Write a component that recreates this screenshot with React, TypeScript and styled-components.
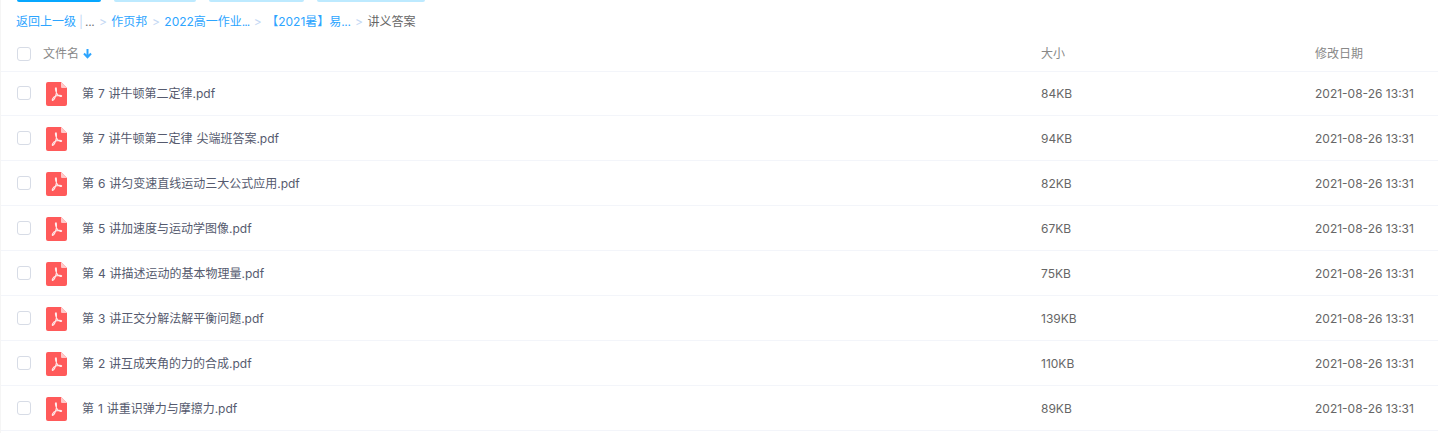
import { createGlobalStyle } from "styled-components"
import styled from "styled-components"

const files = [
    { name: "第 7 讲牛顿第二定律.pdf", size: "84KB" },
    { name: "第 7 讲牛顿第二定律 尖端班答案.pdf", size: "94KB" },
    { name: "第 6 讲匀变速直线运动三大公式应用.pdf", size: "82KB" },
    { name: "第 5 讲加速度与运动学图像.pdf", size: "67KB" },
    { name: "第 4 讲描述运动的基本物理量.pdf", size: "75KB" },
    { name: "第 3 讲正交分解法解平衡问题.pdf", size: "139KB" },
    { name: "第 2 讲互成夹角的力的合成.pdf", size: "110KB" },
    { name: "第 1 讲重识弹力与摩擦力.pdf", size: "89KB" },
]

function PdfIcon() {
    return (
        <svg width="21" height="24" viewBox="0 0 21 24">
            <path d="M2 0H15L21 6V22a2 2 0 0 1-2 2H2a2 2 0 0 1-2-2V2a2 2 0 0 1 2-2z" fill="#ff5a5a" />
            <path d="M15 0L21 6H16a1 1 0 0 1-1-1z" fill="#ffc9c9" />
            <path d="M9.800 5.800c-1 .4 0 3.600.9 5.400.9 1.700 2.500 3.200 3.800 3.300 1 .1 1.300-.4 1-.8-.5-.6-2.700-.5-4.700 0-2 .5-3.700 1.700-4.300 3.200-.5 1.200-.1 1.800.4 1.500 1-.6 2.500-3.400 3.100-5.700.5-2 .8-7.200-.2-6.900z" fill="none" stroke="#ffecec" strokeWidth="1.100" />
        </svg>
    )
}

export default function App() {
    return (
        <Page>
            <GlobalStyle />
            <TopTabs>
                <TopTab $active $width={84} />
                <TopTab $width={82} />
                <TopTab $width={95} />
                <TopTab $width={108} />
            </TopTabs>

            <Crumbs>
                <CrumbLink>返回上一级</CrumbLink>
                <Pipe>|</Pipe>
                <Dots>...</Dots>
                <Sep>&gt;</Sep>
                <CrumbLink>作页邦</CrumbLink>
                <Sep>&gt;</Sep>
                <CrumbLink>2022高一作业<Ellipsis $spacing={-1}>...</Ellipsis></CrumbLink>
                <Sep>&gt;</Sep>
                <CrumbLink>【2021暑】易<Ellipsis $spacing={-0.4}>...</Ellipsis></CrumbLink>
                <Sep>&gt;</Sep>
                <Current>讲义答案</Current>
            </Crumbs>

            <HeadRow>
                <CheckCell><Check /></CheckCell>
                <NameHead>
                    文件名
                    <svg width="11" height="11" viewBox="0 0 11 11">
                        <path d="M5.500 1v8M2 5.500l3.500 3.700L9 5.500" fill="none" stroke="#2da5ff" strokeWidth="2" />
                    </svg>
                </NameHead>
                <SizeCol $head>大小</SizeCol>
                <DateCol $head>修改日期</DateCol>
            </HeadRow>

            {files.map((f) => (
                <Row key={f.name}>
                    <CheckCell><Check /></CheckCell>
                    <IconCell><PdfIcon /></IconCell>
                    <FileName>{f.name}</FileName>
                    <SizeCol>{f.size}</SizeCol>
                    <DateCol>2021-08-26 13:31</DateCol>
                </Row>
            ))}
        </Page>
    )
}

const GlobalStyle = createGlobalStyle`
    html, body {
        margin: 0;
        background: #ffffff;
        overflow: hidden;
    }
    body {
        font-family: Inter, "Noto Sans CJK SC", sans-serif;
        font-size: 12px;
        line-height: 20px;
    }
`

const Page = styled.div`
    width: 1438px;
    height: 433px;
    box-sizing: border-box;
    border-left: 1px solid #f5f5f5;
    overflow: hidden;
`

const TopTabs = styled.div`
    display: flex;
    gap: 13px;
    padding-left: 16px;
    height: 2px;
`

const TopTab = styled.div<{ $active?: boolean; $width: number }>`
    width: ${(p) => p.$width}px;
    height: 2px;
    border-radius: 0 0 2px 2px;
    background: ${(p) => (p.$active ? "#06a7ff" : "#bdeaff")};
`

const Crumbs = styled.div`
    display: flex;
    align-items: center;
    height: 20px;
    margin-top: 10px;
    padding-left: 15px;
`

const CrumbLink = styled.span`
    color: #2da5ff;
`

const Ellipsis = styled.span<{ $spacing: number }>`
    letter-spacing: ${(p) => p.$spacing}px;
`

const Pipe = styled.span`
    color: #c4d8f4;
    margin: 0 2px 0 3px;
`

const Dots = styled.span`
    color: #777777;
    letter-spacing: -0.33px;
`

const Sep = styled.span`
    color: #c4d8f4;
    margin: 0 4.5px;
`

const Current = styled.span`
    color: #666666;
`

const RowBase = styled.div`
    display: flex;
    align-items: center;
    border-bottom: 1px solid #f3f5fa;
`

const HeadRow = styled(RowBase)`
    height: 34px;
    padding-top: 5px;
    margin-bottom: -1px;
`

const Row = styled(RowBase)`
    height: 44px;
`

const CheckCell = styled.div`
    width: 42px;
    flex: none;
    padding-left: 16px;
    box-sizing: border-box;
`

const Check = styled.div`
    width: 14px;
    height: 14px;
    box-sizing: border-box;
    border: 1px solid #d7dce6;
    border-radius: 3px;
    background: #fff;
`

const NameHead = styled.div`
    flex: 1;
    display: flex;
    align-items: center;
    gap: 3px;
    margin-bottom: 1px;
    color: #888888;
`

const IconCell = styled.div`
    width: 39px;
    flex: none;
    padding: 2px 0 0 3px;
    box-sizing: border-box;
    display: flex;
    align-items: center;
`

const FileName = styled.div`
    flex: 1;
    padding-top: 2px;
    word-spacing: 0.5px;
    color: #555a6e;
`

const SizeCol = styled.div<{ $head?: boolean }>`
    width: 274px;
    flex: none;
    padding-top: ${(p) => (p.$head ? "0" : "2px")};
    margin-bottom: ${(p) => (p.$head ? "1px" : "0")};
    color: ${(p) => (p.$head ? "#888888" : "#666666")};
`

const DateCol = styled(SizeCol)`
    width: 123px;
`
